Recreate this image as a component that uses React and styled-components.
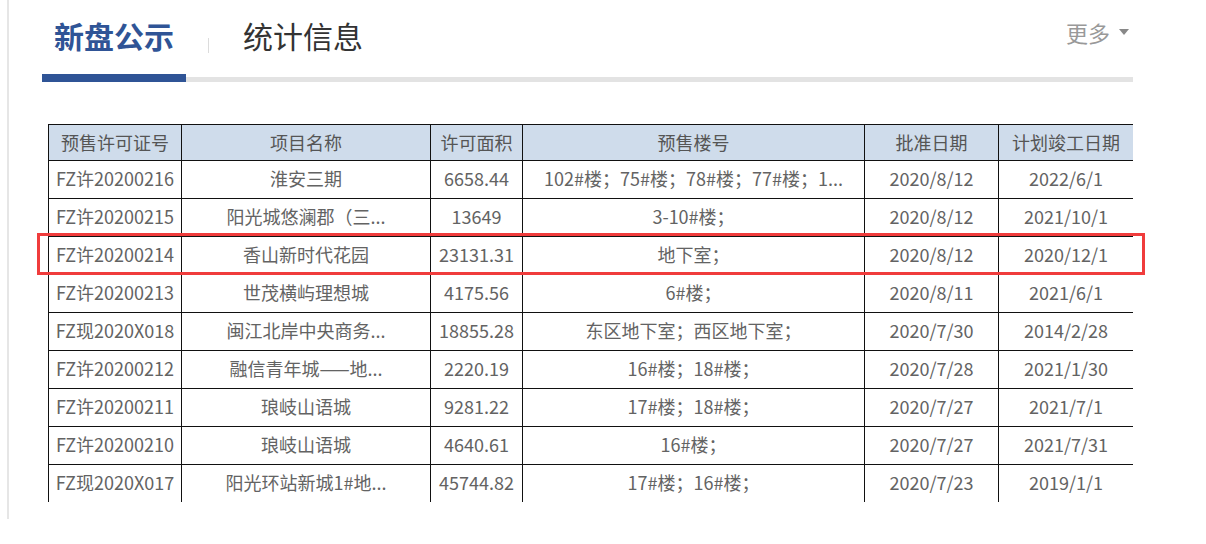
import styled, { createGlobalStyle } from "styled-components";

const GlobalStyle = createGlobalStyle`
  body {
    margin: 0;
    background: #fff;
    font-family: "Noto Sans CJK SC", "Noto Sans", sans-serif;
  }
`;

const Panel = styled.div`
  margin-left: 7px;
  width: 1091px;
  height: 519px;
  border-left: 2px solid #e6e6e6;
  padding-left: 33px;
`;

const TabBar = styled.div`
  display: flex;
  align-items: flex-start;
  height: 82px;
  border-bottom: 5px solid #e3e3e3;
  box-sizing: border-box;
`;

const Tab = styled.div`
  width: ${(p) => (p.$active ? "144px" : "auto")};
  height: 82px;
  box-sizing: border-box;
  padding-top: 16px;
  text-align: center;
  font-size: 30px;
  line-height: 38px;
  font-weight: ${(p) => (p.$active ? 700 : 400)};
  color: ${(p) => (p.$active ? "#2f5496" : "#333")};
  border-bottom: ${(p) => (p.$active ? "8px solid #2f5496" : "none")};
  margin-bottom: ${(p) => (p.$active ? "-5px" : "0")};
`;

const Divider = styled.span`
  width: 1px;
  height: 15px;
  margin: 38px 34px 0 22px;
  background: #dcdcdc;
`;

const More = styled.div`
  margin-left: auto;
  margin-right: 4px;
  padding-top: 18px;
  display: flex;
  align-items: center;
  gap: 9px;
  font-size: 22px;
  line-height: 28px;
  color: #999;
`;

const Caret = styled.span`
  width: 0;
  height: 0;
  border-left: 5px solid transparent;
  border-right: 5px solid transparent;
  border-top: 6px solid #888;
`;

const TableArea = styled.div`
  position: relative;
  margin: 42px 0 0 6px;
`;

const Clip = styled.div`
  height: 378px;
  overflow: hidden;
`;

const Table = styled.table`
  border-collapse: collapse;
  table-layout: fixed;
  width: 1085px;
  font-size: 18px;
  line-height: 24px;
  color: #636363;
`;

const Th = styled.th`
  height: 33px;
  padding: 0 0 2px;
  border: 1px solid #111;
  background: #cfdceb;
  font-weight: 400;
  color: #555;
  text-align: center;
  white-space: nowrap;
`;

const Td = styled.td`
  height: 34px;
  padding: 0 0 3px;
  border: 1px solid #111;
  text-align: center;
  white-space: nowrap;
  overflow: hidden;
`;

const Highlight = styled.div`
  position: absolute;
  left: -11px;
  top: 109px;
  width: 1108px;
  height: 42px;
  box-sizing: border-box;
  border: 3px solid #f03c3c;
  pointer-events: none;
`;

const columns = [
  { title: "预售许可证号", width: 133 },
  { title: "项目名称", width: 249 },
  { title: "许可面积", width: 92 },
  { title: "预售楼号", width: 342 },
  { title: "批准日期", width: 134 },
  { title: "计划竣工日期", width: 135 },
];

const rows = [
  ["FZ许20200216", "淮安三期", "6658.44", "102#楼；75#楼；78#楼；77#楼；1...", "2020/8/12", "2022/6/1"],
  ["FZ许20200215", "阳光城悠澜郡（三...", "13649", "3-10#楼；", "2020/8/12", "2021/10/1"],
  ["FZ许20200214", "香山新时代花园", "23131.31", "地下室；", "2020/8/12", "2020/12/1"],
  ["FZ许20200213", "世茂横屿理想城", "4175.56", "6#楼；", "2020/8/11", "2021/6/1"],
  ["FZ现2020X018", "闽江北岸中央商务...", "18855.28", "东区地下室；西区地下室；", "2020/7/30", "2014/2/28"],
  ["FZ许20200212", "融信青年城——地...", "2220.19", "16#楼；18#楼；", "2020/7/28", "2021/1/30"],
  ["FZ许20200211", "琅岐山语城", "9281.22", "17#楼；18#楼；", "2020/7/27", "2021/7/1"],
  ["FZ许20200210", "琅岐山语城", "4640.61", "16#楼；", "2020/7/27", "2021/7/31"],
  ["FZ现2020X017", "阳光环站新城1#地...", "45744.82", "17#楼；16#楼；", "2020/7/23", "2019/1/1"],
];

export default function App() {
  return (
    <>
      <GlobalStyle />
      <Panel>
        <TabBar>
          <Tab $active>新盘公示</Tab>
          <Divider />
          <Tab>统计信息</Tab>
          <More>
            更多
            <Caret />
          </More>
        </TabBar>
        <TableArea>
          <Clip>
            <Table>
              <colgroup>
                {columns.map((c) => (
                  <col key={c.title} style={{ width: c.width }} />
                ))}
              </colgroup>
              <thead>
                <tr>
                  {columns.map((c) => (
                    <Th key={c.title}>{c.title}</Th>
                  ))}
                </tr>
              </thead>
              <tbody>
                {rows.map((r) => (
                  <tr key={r[0]}>
                    {r.map((v, i) => (
                      <Td key={i}>{v}</Td>
                    ))}
                  </tr>
                ))}
              </tbody>
            </Table>
          </Clip>
          <Highlight />
        </TableArea>
      </Panel>
    </>
  );
}
